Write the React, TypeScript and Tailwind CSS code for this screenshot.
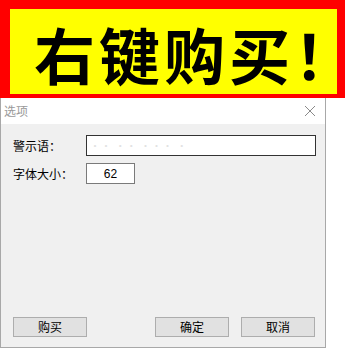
export default function App() {
  const cjk = { fontFamily: '"Noto Sans CJK SC", "Microsoft YaHei", sans-serif' };
  return (
    <div className="w-[345px] h-[349px] bg-white overflow-hidden flex flex-col" style={cjk}>
      {/* banner */}
      <div className="h-[98px] shrink-0 bg-[#ff0000] pt-[9px] pl-[10px] pr-[8px] pb-[4px] flex">
        <div className="flex-1 min-w-0 bg-[#ffff00] flex items-center pl-[24px]">
          <span className="text-[61px] leading-none font-bold text-black whitespace-nowrap mt-[3px]">
            <span className="tracking-[4px]">右键购买</span>
            <span className="tracking-[-30px]">！</span>
          </span>
        </div>
      </div>

      {/* dialog */}
      <div className="w-[326px] flex-1 mb-[1px] flex flex-col border-x border-b border-[#a8a8a8] bg-[#f0f0f0]">
        <div className="h-[26px] shrink-0 bg-white flex items-center justify-between pl-[3px] pr-[8px]">
          <span className="text-[12px] text-[#999999] leading-none">选项</span>
          <svg width="12" height="12" viewBox="0 0 12 12" className="mr-[1px]">
            <path d="M1 1 L11 11 M11 1 L1 11" stroke="#8a8a8a" strokeWidth="1" fill="none" />
          </svg>
        </div>

        <div className="flex-1 flex flex-col pt-[11px] pl-[12px] pb-[10px] text-[12px] text-black">
          <div className="flex items-center h-[21px]">
            <span className="w-[73px] leading-none">警示语：</span>
            <div className="w-[230px] h-[21px] bg-white border border-[#333333] flex items-center pl-[3px]">
              <span className="text-[10px] text-[#e2e2e2] leading-none tracking-[1px]">·· ·· ··· ·</span>
            </div>
          </div>
          <div className="flex items-center h-[21px] mt-[7px]">
            <span className="w-[73px] leading-none">字体大小：</span>
            <div className="w-[49px] h-[21px] bg-white border border-[#7a7a7a] flex items-center justify-center">
              <span className="text-[12px] leading-none" style={{ fontFamily: '"Liberation Sans", sans-serif' }}>62</span>
            </div>
          </div>

          <div className="mt-auto flex items-center">
            <button className="w-[74px] h-[20px] bg-[#e1e1e1] border border-[#adadad] text-[12px] leading-none text-black">购买</button>
            <div className="flex-1" />
            <button className="w-[74px] h-[20px] bg-[#e1e1e1] border border-[#adadad] text-[12px] leading-none text-black">确定</button>
            <button className="w-[74px] h-[20px] ml-[12px] mr-[10px] bg-[#e1e1e1] border border-[#adadad] text-[12px] leading-none text-black">取消</button>
          </div>
        </div>
      </div>
    </div>
  );
}
